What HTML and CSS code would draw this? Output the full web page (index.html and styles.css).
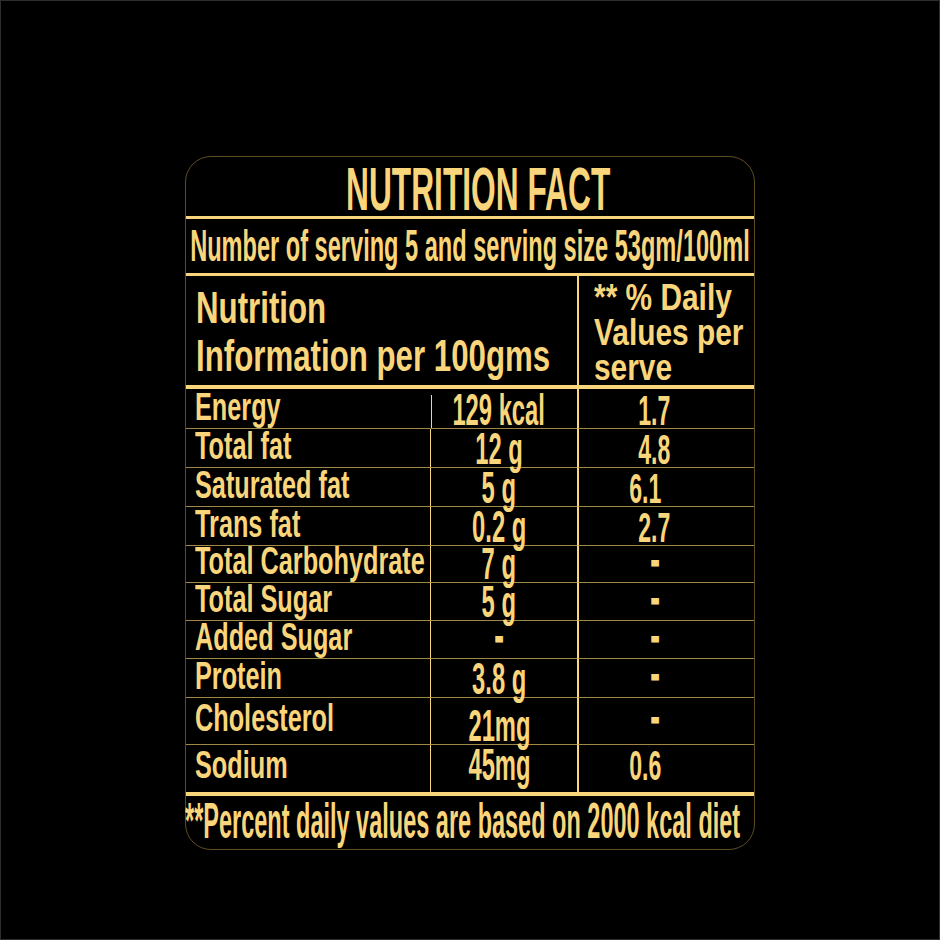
FILE: index.html
```html
<!DOCTYPE html>
<html>
<head>
<meta charset="utf-8">
<link rel="stylesheet" href="styles.css">
</head>
<body>
<div class="frame">
  <div class="card">
    <div class="title"><span class="tx t-title">NUTRITION FACT</span></div>
    <div class="rule r3"></div>
    <div class="serving"><span class="tx t-serving">Number of serving 5 and serving size 53gm/100ml</span></div>
    <div class="rule r3"></div>
    <div class="head">
      <div class="head-left">
        <span class="tx t-head">Nutrition</span>
        <span class="tx t-head">Information per 100gms</span>
      </div>
      <div class="head-right">
        <span class="tx t-dvhead">** % Daily</span>
        <span class="tx t-dvhead">Values per</span>
        <span class="tx t-dvhead">serve</span>
      </div>
    </div>
    <div class="rule r4"></div>
    <div class="table">
      <div class="c lab"><span class="tx t-lab">Energy</span></div>
      <div class="c val first"><span class="tx t-val">129 kcal</span></div>
      <div class="c dv"><span class="tx t-dv">1.7</span></div>

      <div class="c lab"><span class="tx t-lab">Total fat</span></div>
      <div class="c val"><span class="tx t-val">12 g</span></div>
      <div class="c dv"><span class="tx t-dv">4.8</span></div>

      <div class="c lab"><span class="tx t-lab">Saturated fat</span></div>
      <div class="c val"><span class="tx t-val">5 g</span></div>
      <div class="c dv dv-left"><span class="tx t-dv">6.1</span></div>

      <div class="c lab"><span class="tx t-lab">Trans fat</span></div>
      <div class="c val"><span class="tx t-val">0.2 g</span></div>
      <div class="c dv"><span class="tx t-dv">2.7</span></div>

      <div class="c lab"><span class="tx t-lab">Total Carbohydrate</span></div>
      <div class="c val"><span class="tx t-val">7 g</span></div>
      <div class="c dv dash"><span class="tx t-dash">-</span></div>

      <div class="c lab"><span class="tx t-lab">Total Sugar</span></div>
      <div class="c val"><span class="tx t-val">5 g</span></div>
      <div class="c dv dash"><span class="tx t-dash">-</span></div>

      <div class="c lab"><span class="tx t-lab">Added Sugar</span></div>
      <div class="c val dash"><span class="tx t-dash">-</span></div>
      <div class="c dv dash"><span class="tx t-dash">-</span></div>

      <div class="c lab"><span class="tx t-lab">Protein</span></div>
      <div class="c val"><span class="tx t-val">3.8 g</span></div>
      <div class="c dv dash"><span class="tx t-dash">-</span></div>

      <div class="c lab lab-tall"><span class="tx t-lab">Cholesterol</span></div>
      <div class="c val"><span class="tx t-val">21mg</span></div>
      <div class="c dv dash"><span class="tx t-dash">-</span></div>

      <div class="c lab lab-last last"><span class="tx t-lab">Sodium</span></div>
      <div class="c val last raise"><span class="tx t-val">45mg</span></div>
      <div class="c dv dv-left last raise"><span class="tx t-dv">0.6</span></div>
    </div>
    <div class="rule r4"></div>
    <div class="footer"><span class="tx t-foot">**Percent daily values are based on 2000 kcal diet</span></div>
  </div>
</div>
</body>
</html>
```

FILE: styles.css
```css
html, body {
  margin: 0;
  padding: 0;
  background: #000;
}

.frame {
  width: 940px;
  height: 940px;
  box-sizing: border-box;
  border: 1px solid #2e2e2e;
  padding: 155px 0 0 184px;
  background: #000;
}

.card {
  width: 570px;
  height: 694px;
  box-sizing: border-box;
  border: 1px solid #5e4d24;
  border-radius: 26px;
  display: flex;
  flex-direction: column;
  color: #f9d57b;
  font-family: "Liberation Sans", Arial, sans-serif;
  font-weight: 700;
  background: #000;
}

.tx {
  display: inline-block;
  white-space: nowrap;
  line-height: 1;
}

.rule {
  background: #f9d57b;
  flex: none;
}
.r3 { height: 3px; }
.r4 { height: 4px; }

/* title */
.title {
  height: 59px;
  box-sizing: border-box;
  padding: 2px 0 0 16px;
  display: flex;
  justify-content: center;
  flex: none;
}
.t-title {
  font-size: 61px;
  transform: scaleX(0.52);
  transform-origin: center;
}

/* serving */
.serving {
  height: 54px;
  box-sizing: border-box;
  padding-top: 4px;
  display: flex;
  justify-content: center;
  flex: none;
}
.t-serving {
  font-size: 45px;
  transform: scaleX(0.524);
  transform-origin: center;
}

/* header */
.head {
  height: 109px;
  display: grid;
  grid-template-columns: 391px 1fr;
  flex: none;
}
.head-left {
  display: flex;
  flex-direction: column;
  padding: 8px 0 0 10px;
}
.t-head {
  font-size: 44px;
  line-height: 48px;
  transform: scaleX(0.71);
  transform-origin: left center;
}
.head-right {
  display: flex;
  flex-direction: column;
  border-left: 2px solid #f9d57b;
  padding: 4px 0 0 15px;
}
.t-dvhead {
  font-size: 36px;
  line-height: 35px;
  transform: scaleX(0.83);
  transform-origin: left center;
}

/* table */
.table {
  height: 403px;
  display: grid;
  grid-template-columns: 244px 147px 1fr;
  grid-template-rows: 40px 39px 39px 39px 37px 38px 38px 39px 47px 47px;
  flex: none;
}
.c {
  display: flex;
  align-items: flex-end;
  box-sizing: border-box;
  border-bottom: 1px solid #a08849;
  min-width: 0;
}
.c.last {
  border-bottom: none;
}
.lab {
  padding: 0 0 2px 9px;
}
.lab-tall {
  padding-bottom: 7px;
}
.lab-last {
  padding-bottom: 8px;
}
.t-lab {
  font-size: 38px;
  transform: scaleX(0.665);
  transform-origin: left center;
}
.val {
  justify-content: center;
  padding-right: 10px;
  border-left: 1px solid #f9d57b;
}
.val.first {
  border-left-color: transparent;
  background: linear-gradient(#f9d57b, #f9d57b) left 6px / 1px 100% no-repeat;
}
.t-val {
  font-size: 44px;
  line-height: 0.85;
  transform: scaleX(0.54);
  transform-origin: center;
}
.dv {
  justify-content: center;
  padding-right: 24px;
  border-left: 2px solid #f9d57b;
}
.dv-left {
  padding-right: 42px;
}
.t-dv {
  font-size: 42px;
  line-height: 0.8;
  transform: scaleX(0.55);
  transform-origin: center;
}
.raise {
  padding-bottom: 9px;
}
.dash {
  align-items: center;
  padding-bottom: 6px;
}
.t-dash {
  font-size: 30px;
  -webkit-text-stroke: 3px #f9d57b;
  transform: scaleX(0.72);
  transform-origin: center;
}

/* footer */
.footer {
  height: 53px;
  display: flex;
  justify-content: center;
  padding-right: 14px;
  flex: none;
}
.t-foot {
  font-size: 50px;
  transform: scaleX(0.47);
  transform-origin: center;
}
```
